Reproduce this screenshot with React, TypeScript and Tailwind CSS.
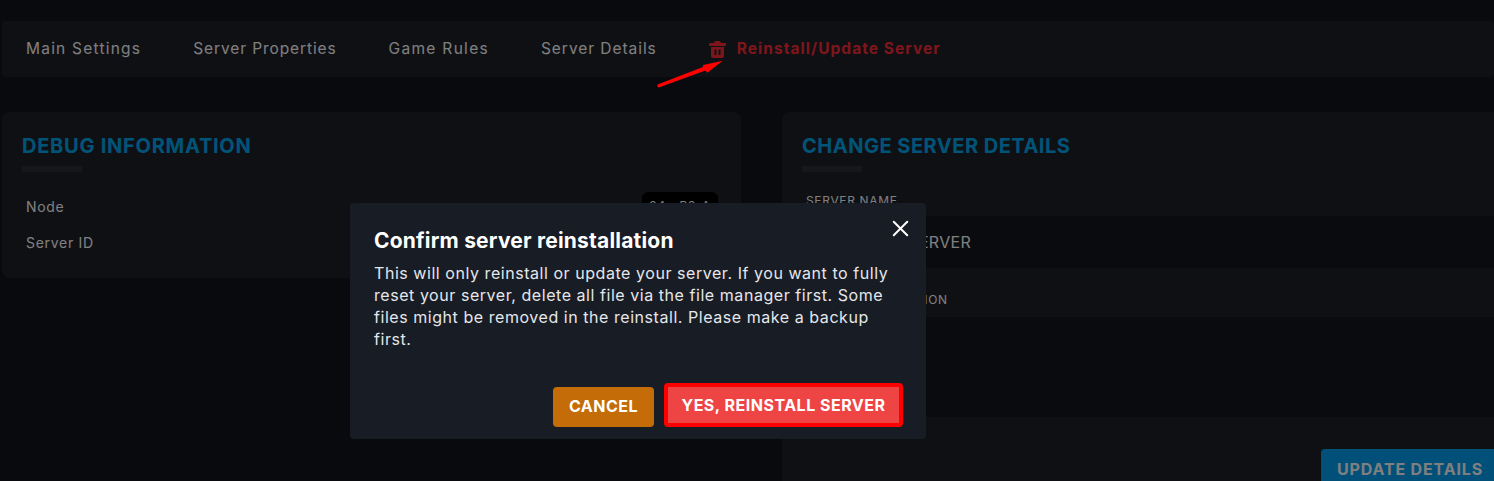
import { X } from "lucide-react";

const font = { fontFamily: "Inter, 'Open Sans', sans-serif" };

function TrashIcon() {
  return (
    <svg viewBox="0 0 17 17" className="h-[17px] w-[17px] fill-red-500">
      <path d="M6 0h5l1 2h4.200a.8.8 0 0 1 .8.8v1.400a.8.8 0 0 1-.8.8H.8a.8.8 0 0 1-.8-.8V2.800A.8.8 0 0 1 .8 2H5z" />
      <path
        fillRule="evenodd"
        d="M2 6h13v9a2 2 0 0 1-2 2H4a2 2 0 0 1-2-2zm3.500 2.500v5.500h2V8.500zm4 0v5.500h2V8.500z"
      />
    </svg>
  );
}

function Heading({ children, tracking }: { children: string; tracking: string }) {
  return (
    <div>
      <h2 className={`text-[20px] font-bold leading-[24px] text-[#00a8f0] ${tracking}`}>{children}</h2>
      <div className="mt-[8px] h-[6px] w-[60px] bg-[#2c2e36]" />
    </div>
  );
}

export default function App() {
  return (
    <div className="relative h-[481px] w-[1494px] overflow-hidden bg-[#12141c]" style={font}>
      <nav className="ml-[2px] flex h-[56px] translate-y-[21px] items-center gap-[52px] rounded bg-[#1e2028] pl-6 text-[15.5px] font-normal text-white">
        <span className="tracking-[1.22px]">Main Settings</span>
        <span className="tracking-[0.9px]">Server Properties</span>
        <span className="tracking-[1.3px]">Game Rules</span>
        <span className="tracking-[0.95px]">Server Details</span>
        <span className="flex items-center gap-[11px] font-bold tracking-[1.05px] text-red-500">
          <TrashIcon />
          Reinstall/Update Server
        </span>
      </nav>

      <div className="mt-[56px] flex gap-[41px] pl-[2px]">
        <section className="h-[166px] w-[739px] rounded-lg bg-[#1e2028] px-5 pt-[22px]">
          <Heading tracking="tracking-[0.75px]">DEBUG INFORMATION</Heading>
          <div className="mt-[20px] flex h-[28px] items-center justify-between pl-1 pr-[3px] text-[14px] tracking-[0.7px] text-white">
            <span>Node</span>
            <span className="flex h-[28px] w-[76px] items-center justify-center rounded-md bg-black text-[12px]">84a-P2-A</span>
          </div>
          <div className="mt-[12px] pl-1 text-[14px] tracking-[0.7px] text-white">Server ID</div>
        </section>

        <section className="h-[369px] w-[712px] rounded-tl-lg bg-[#1e2028]">
          <div className="px-5 pt-[22px]">
            <Heading tracking="tracking-[0.5px]">CHANGE SERVER DETAILS</Heading>
            <div className="mt-[21px] pl-1 text-[12px] leading-[16px] tracking-[0.65px] text-white">SERVER NAME</div>
          </div>
          <div className="mt-[7px] flex h-[52px] items-center justify-end bg-[#14161c] pr-[523px] text-[16px] tracking-[0.3px] text-white">
            MY SERVER
          </div>
          <div className="flex h-[49px] items-center pl-6 pt-[15px] text-[12px] tracking-[0.7px] text-white">SERVER DESCRIPTION</div>
          <div className="h-[100px] bg-[#14161c]" />
          <div className="flex justify-end pt-[32px]">
            <button className="h-[40px] w-[173px] rounded-tl bg-[#00a0f4] pl-4 text-left text-[16px] font-bold tracking-[0.85px] text-white">
              UPDATE DETAILS
            </button>
          </div>
        </section>
      </div>

      {/* overlay */}
      <div className="absolute inset-0 bg-black/50" />

      {/* red annotation arrow */}
      <svg className="absolute left-[650px] top-[52px] h-[40px] w-[80px]" viewBox="0 0 80 40">
        <path d="M7.500 32.600 L53 15 L53 13 L72.700 8.700 L57.300 20.700 L55.500 18.500 L8.800 35.400 Q7 35.500 7.500 32.600 Z" fill="#ff0000" />
      </svg>

      <div className="absolute left-[350px] top-[203px] flex h-[236px] w-[576px] flex-col rounded bg-[#181c24] pl-6 pr-[23px] pt-[25px]">
        <X className="absolute right-[12px] top-[12px] h-[27px] w-[27px] text-white" strokeWidth={1.8} />
        <h3 className="text-[21px] font-bold leading-[26px] tracking-[0.2px] text-white">Confirm server reinstallation</h3>
        <p className="mt-[8px] text-[16px] leading-[22px] tracking-[0.55px] text-[#e5e7eb]">
          This will only reinstall or update your server. If you want to fully
          <br />
          reset your server, delete all file via the file manager first. Some
          <br />
          files might be removed in the reinstall. Please make a backup
          <br />
          first.
        </p>
        <div className="mt-[33px] flex items-end justify-end gap-[10px]">
          <button className="h-[40px] w-[101px] rounded bg-[#c46c07] pb-[2px] text-[16px] font-bold tracking-[0.5px] text-white">CANCEL</button>
          <button className="h-[44px] w-[239px] rounded border-[4px] border-[#ff0000] bg-[#ef4444] text-[16px] font-bold tracking-[0.5px] text-white">
            YES, REINSTALL SERVER
          </button>
        </div>
      </div>
    </div>
  );
}
